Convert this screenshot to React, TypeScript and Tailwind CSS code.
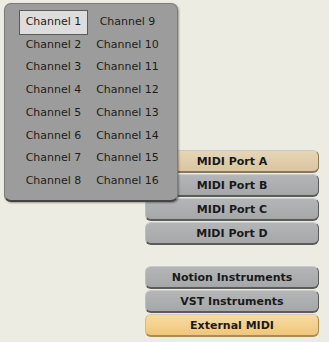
import { useState } from "react";

const channels = Array.from({ length: 16 }, (_, i) => `Channel ${i + 1}`);

const ports = ["MIDI Port A", "MIDI Port B", "MIDI Port C", "MIDI Port D"];
const sources = ["Notion Instruments", "VST Instruments", "External MIDI"];

const PanelButton = ({ label, tone }: { label: string; tone: "gray" | "tan" | "orange" }) => {
  const toneClass =
    tone === "tan"
      ? "bg-gradient-to-b from-[#e6d6b6] to-[#d9c59f] border-[#8a7650]"
      : tone === "orange"
        ? "bg-gradient-to-b from-[#f8dba0] to-[#efc67c] border-[#b48a3e]"
        : "bg-gradient-to-b from-[#b4b5b7] to-[#a6a7a9] border-[#5a5a5c]";

  return (
    <button
      className={`h-[23px] w-[174px] rounded-[6px] border border-t-[#c9c9c9] border-l-[#bdbdbd] ${toneClass} border-b-[2px] text-[11px] font-bold text-[#1a1a1a] leading-none`}
    >
      {label}
    </button>
  );
};

export default function App() {
  const [selected, setSelected] = useState(0);

  return (
    <div
      className="relative h-[342px] w-[329px] overflow-hidden bg-[#edece3]"
      style={{ fontFamily: '"DejaVu Sans", Verdana, sans-serif' }}
    >
      {/* Routing buttons */}
      <div className="flex flex-col pl-[145px] pt-[150px]">
        <div className="flex flex-col gap-px">
          {ports.map((p, i) => (
            <PanelButton key={p} label={p} tone={i === 0 ? "tan" : "gray"} />
          ))}
        </div>

        <div className="mt-[21px] flex flex-col gap-px">
          {sources.map((s, i) => (
            <PanelButton key={s} label={s} tone={i === 2 ? "orange" : "gray"} />
          ))}
        </div>
      </div>

      {/* Channel popup */}
      <div className="absolute left-[4px] top-[3px] w-[174px] h-[199px] rounded-[7px] border border-[#7c7c7c] border-b-[2px] border-b-[#444] bg-[#9c9c9c] pl-[14px] pt-[7px] shadow-[1px_1px_2px_rgba(0,0,0,0.35)]">
        <div className="grid grid-flow-col grid-rows-8 grid-cols-[69px_69px] gap-x-[5px]">
          {channels.map((c, i) => (
            <div
              key={c}
              onClick={() => setSelected(i)}
              className={`flex h-[22.7px] items-center justify-center text-[11px] text-[#1f1c18] ${
                selected === i ? "-my-[1px] h-[24.7px] border border-[#5a5a5a] bg-[#dcdddc]" : ""
              }`}
            >
              {c}
            </div>
          ))}
        </div>
      </div>
    </div>
  );
}
